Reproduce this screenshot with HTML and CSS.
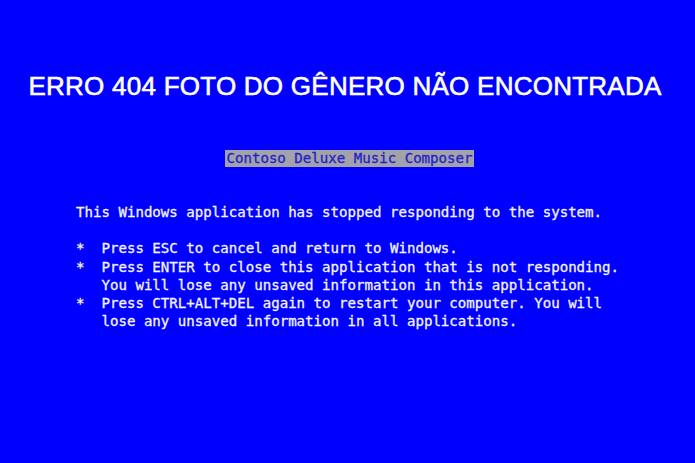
FILE: index.html
```html
<!DOCTYPE html>
<html lang="pt">
<head>
<meta charset="utf-8">
<title>Erro 404</title>
<link rel="stylesheet" href="styles.css">
</head>
<body>
<div class="screen">
  <h1 class="headline">ERRO 404 FOTO DO GÊNERO NÃO ENCONTRADA</h1>
  <div class="title-row"><span class="app-title">Contoso Deluxe Music Composer</span></div>
  <pre class="message">This Windows application has stopped responding to the system.

*  Press ESC to cancel and return to Windows.
*  Press ENTER to close this application that is not responding.
   You will lose any unsaved information in this application.
*  Press CTRL+ALT+DEL again to restart your computer. You will
   lose any unsaved information in all applications.</pre>
</div>
</body>
</html>
```

FILE: styles.css
```css
html, body {
  margin: 0;
  padding: 0;
  background: #0000fe;
}

.screen {
  width: 695px;
  height: 463px;
  background: #0000fe;
  overflow: hidden;
  padding-top: 71px;
  box-sizing: border-box;
}

.headline {
  margin: 0;
  padding-right: 5px;
  font-family: "Liberation Sans", Arial, sans-serif;
  font-weight: 400;
  font-size: 26px;
  line-height: 30px;
  letter-spacing: 0.25px;
  color: #ffffff;
  text-align: center;
  -webkit-text-stroke: 0.6px #ffffff;
}

.title-row {
  margin-top: 48px;
  text-align: center;
  padding-left: 4px;
  height: 17px;
  line-height: 17px;
}

.app-title {
  display: inline-block;
  height: 17px;
  line-height: 17px;
  padding: 0 1px;
  background: #a2a2a8;
  color: #2222cc;
  font-family: "DejaVu Sans Mono", monospace;
  font-size: 14.1px;
  -webkit-text-stroke: 0.3px #2222cc;
}

.message {
  margin: 37px 0 0 0;
  padding-left: 76px;
  font-family: "DejaVu Sans Mono", monospace;
  font-size: 14.1px;
  line-height: 18.2px;
  color: #f4f4ff;
  white-space: pre;
  -webkit-text-stroke: 0.3px #f4f4ff;
}
```
